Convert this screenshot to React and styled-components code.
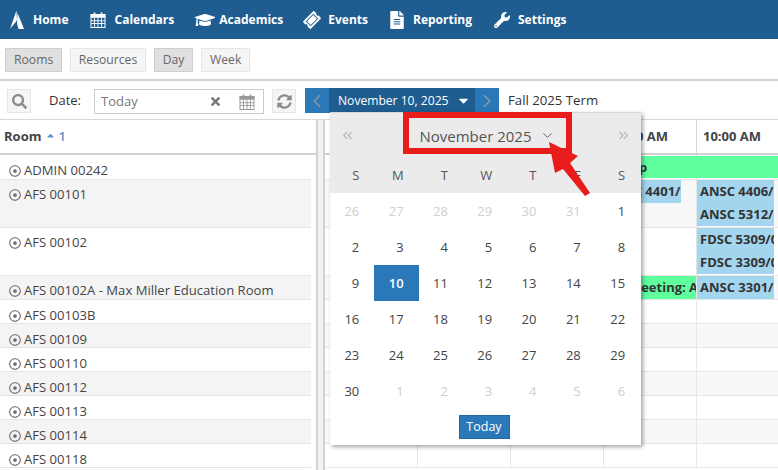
import React from "react";
import styled, { createGlobalStyle } from "styled-components";
import {
  FaGraduationCap,
  FaTicketAlt,
  FaFileAlt,
  FaWrench,
  FaSearch,
  FaTimes,
  FaSyncAlt,
  FaCaretDown,
  FaCaretUp,
  FaRegDotCircle,
} from "react-icons/fa";
import { ChevronDown, ChevronLeft, ChevronRight, ChevronsLeft, ChevronsRight } from "lucide-react";

const GlobalStyle = createGlobalStyle`
  html, body {
    margin: 0;
    padding: 0;
    background: #fff;
    overflow: hidden;
  }
  * {
    box-sizing: border-box;
  }
`;

const Page = styled.div`
  position: relative;
  width: 778px;
  height: 470px;
  overflow: hidden;
  font-family: "Open Sans", "Liberation Sans", sans-serif;
  font-size: 13px;
  color: #333;
`;

const NavBar = styled.div`
  display: flex;
  align-items: center;
  height: 39px;
  background: #1f5d91;
  padding-left: 9px;
`;

const NavItem = styled.div`
  display: flex;
  align-items: center;
  gap: ${(props) => props.gap || 8}px;
  margin-right: ${(props) => props.space || 0}px;
  color: #fff;
  font-weight: 700;
  font-size: 12px;
  white-space: nowrap;
  svg {
    display: block;
  }
`;

const ToolBar = styled.div`
  display: flex;
  align-items: flex-start;
  gap: 7.5px;
  height: 42px;
  padding: 9px 5px 0;
  border-bottom: 2px solid #d2d2d2;
`;

const ToggleButton = styled.div`
  height: 24px;
  padding: 0 8px;
  line-height: 22px;
  font-size: 12.2px;
  color: #666;
  background: ${(props) => (props.active ? "#e0e0e0" : "#f5f5f5")};
  border: 1px solid ${(props) => (props.active ? "#cfcfcf" : "#e6e6e6")};
`;

const DateRow = styled.div`
  display: flex;
  align-items: flex-start;
  height: 38px;
  padding: 7px 0 0 7px;
`;

const IconButton = styled.div`
  width: 24px;
  height: 24px;
  margin: 1px 0 0 ${(props) => props.before || 0}px;
  display: flex;
  align-items: center;
  justify-content: center;
  background: #f5f5f5;
  border: 1px solid #e6e6e6;
  color: #8c8c8c;
`;

const DateLabel = styled.div`
  margin: 3px 13px 0 18px;
  font-size: 13px;
  color: #333;
`;

const DateInput = styled.div`
  display: flex;
  align-items: center;
  width: 170px;
  height: 25px;
  margin-top: 1px;
  padding: 0 8px 0 6px;
  border: 1px solid #ccc;
  color: #777;
  font-size: 13px;
`;

const InputText = styled.span`
  flex: 1;
  margin-top: -2px;
`;

const ClearIcon = styled.span`
  display: flex;
  margin-right: 17px;
  color: #777;
`;

const DateNav = styled.div`
  display: flex;
  height: 25px;
  margin-left: 9px;
`;

const NavArrow = styled.div`
  width: 24px;
  display: flex;
  align-items: center;
  justify-content: center;
  background: #2a78b7;
  color: #8d9aa6;
`;

const NavCurrent = styled.div`
  display: flex;
  align-items: center;
  justify-content: space-between;
  width: 146px;
  padding: 0 4px 0 9px;
  background: #1f5d91;
  color: #fff;
  font-size: 12.1px;
`;

const TermLabel = styled.div`
  margin: 3px 0 0 9px;
  font-size: 13.2px;
  color: #333;
`;

const Grid = styled.div`
  display: flex;
  border-top: 1px solid #d8d8d8;
  height: 351px;
`;

const RoomPane = styled.div`
  width: 316px;
  flex-shrink: 0;
`;

const RoomHeader = styled.div`
  display: flex;
  align-items: center;
  height: 35px;
  padding: 0 0 2px 4px;
  border-bottom: 2px solid #d2d2d2;
  font-weight: 700;
  font-size: 13px;
  color: #444;
`;

const SortMark = styled.span`
  display: flex;
  align-items: center;
  margin-left: 4px;
  gap: 2px;
  color: #5f90c8;
  font-weight: 600;
`;

const RoomRow = styled.div`
  display: flex;
  align-items: flex-start;
  gap: 3px;
  width: 311px;
  height: ${(props) => props.height}px;
  padding: ${(props) => props.inset || 6}px 0 0 9px;
  background: ${(props) => (props.shaded ? "#f4f4f4" : "#fff")};
  border-bottom: 1px solid #e4e4e4;
  font-size: 13.1px;
  line-height: 18px;
  color: #444;
  svg {
    margin-top: 4px;
    color: #6e6e6e;
  }
`;

const Splitter = styled.div`
  width: 9px;
  flex-shrink: 0;
  background: #f2f2f2;
  border-left: 2px solid #d2d2d2;
  border-right: 2px solid #d2d2d2;
`;

const SchedulePane = styled.div`
  flex: 1;
  overflow: hidden;
`;

const TimeRow = styled.div`
  display: grid;
  grid-template-columns: repeat(6, 93px);
  height: 35px;
  border-bottom: 2px solid #d2d2d2;
`;

const TimeCell = styled.div`
  padding: 7px 0 0 6px;
  border-right: 1px solid #d8d8d8;
  font-weight: 700;
  font-size: 13px;
  color: #444;
  white-space: nowrap;
`;

const SlotRow = styled.div`
  display: grid;
  grid-template-columns: repeat(6, 93px);
  width: 558px;
  height: ${(props) => props.height}px;
  background: ${(props) => (props.shaded ? "#f8f8f8" : "#fff")};
  border-bottom: 1px solid #e6e6e6;
`;

const SlotCell = styled.div`
  border-right: 1px solid #e6e6e6;
  grid-row: 1;
  grid-column: ${(props) => props.col};
`;

const EventStack = styled.div`
  grid-row: 1;
  grid-column: ${(props) => props.col} / span ${(props) => props.span || 1};
  margin-top: ${(props) => props.top || 0}px;
  overflow: hidden;
`;

const EventBar = styled.div`
  width: ${(props) => props.width || "100%"};
  height: ${(props) => props.height}px;
  padding-left: 3px;
  background: ${(props) => (props.tone === "green" ? "#5fff9e" : "#a3d5ef")};
  font-weight: 700;
  font-size: 13px;
  line-height: 23px;
  color: #333;
  white-space: nowrap;
  overflow: hidden;
`;

const Popover = styled.div`
  position: absolute;
  left: 330px;
  top: 112px;
  width: 311px;
  height: 333px;
  background: #fff;
  box-shadow: 2px 2px 4px rgba(0, 0, 0, 0.35);
  border-top: 1px solid #d8d8d8;
`;

const PopoverHead = styled.div`
  height: 80px;
  background: #ebebeb;
`;

const MonthNav = styled.div`
  display: flex;
  align-items: center;
  justify-content: space-between;
  height: 45px;
  padding: 0 10px;
  color: #b5b5b5;
`;

const MonthTitle = styled.div`
  display: flex;
  align-items: center;
  gap: 8px;
  margin-left: 3px;
  font-size: 15px;
  color: #555;
  svg {
    color: #666;
  }
`;

const WeekRow = styled.div`
  display: grid;
  grid-template-columns: repeat(7, 44.3px);
  margin-top: 8px;
  text-align: right;
  font-size: 13px;
  color: #555;
  div {
    padding-right: 15px;
  }
`;

const DayGrid = styled.div`
  display: grid;
  grid-template-columns: repeat(7, 44.3px);
  grid-auto-rows: 36px;
  text-align: right;
  font-size: 13px;
`;

const DayCell = styled.div`
  padding-right: 15px;
  line-height: 36px;
  color: ${(props) => (props.selected ? "#fff" : props.muted ? "#cfcfcf" : "#444")};
  background: ${(props) => (props.selected ? "#2a78b7" : "transparent")};
  font-weight: ${(props) => (props.selected ? 600 : 400)};
`;

const PopoverFoot = styled.div`
  display: flex;
  justify-content: center;
  padding: 6px 3px 0 0;
`;

const TodayButton = styled.div`
  width: 51px;
  height: 24px;
  line-height: 22px;
  text-align: center;
  background: #2a78b7;
  border: 1px solid #1f6aa5;
  color: #fff;
  font-size: 12.5px;
`;

const RedBox = styled.div`
  position: absolute;
  left: 73px;
  top: -1px;
  width: 169px;
  height: 42px;
  border: 6px solid #e91c1c;
`;

const RedArrow = styled.svg`
  position: absolute;
  left: 540px;
  top: 135px;
`;

const CalendarGlyph = ({ size = 16, color = "#fff" }) => (
  <svg width={size} height={size} viewBox="0 0 16 16" fill="none" stroke={color}>
    <rect x="1" y="2.5" width="14" height="13" strokeWidth="1" />
    <rect x="1" y="2.5" width="14" height="3" fill={color} strokeWidth="0.6" />
    <path d="M4.5 6v9M8 6v9M11.5 6v9M1 8.7h14M1 11.5h14" strokeWidth="0.9" />
    <path d="M4.5 0.5v3.5M11.5 0.5v3.5" strokeWidth="1.8" />
  </svg>
);

const Logo = () => (
  <svg width="16" height="20" viewBox="0 0 16 20" fill="#fff">
    <path d="M7.5 0.5 L1 19 C3 16 6 13.5 8 10 Z" />
    <path d="M8.5 3 L15 19 L9.5 19 L8 13.5 Z" />
  </svg>
);

const ROOMS = [
  { name: "ADMIN 00242", height: 25 },
  { name: "AFS 00101", height: 48, shaded: true, inset: 5 },
  { name: "AFS 00102", height: 48, inset: 5 },
  { name: "AFS 00102A - Max Miller Education Room", height: 24, shaded: true, inset: 5 },
  { name: "AFS 00103B", height: 24 },
  { name: "AFS 00109", height: 24, shaded: true },
  { name: "AFS 00110", height: 24 },
  { name: "AFS 00112", height: 24, shaded: true },
  { name: "AFS 00113", height: 24 },
  { name: "AFS 00114", height: 24, shaded: true },
  { name: "AFS 00118", height: 24 },
];

const TIMES = ["06:00 AM", "07:00 AM", "08:00 AM", "09:00 AM", "10:00 AM", "11:00 AM"];
const COLUMNS = [1, 2, 3, 4, 5, 6];
const WEEK = ["S", "M", "T", "W", "T", "F", "S"];

const DAYS = [
  ...[26, 27, 28, 29, 30, 31].map((day) => ({ day, muted: true })),
  ...Array.from({ length: 30 }, (_, i) => ({ day: i + 1 })),
  ...[1, 2, 3, 4, 5, 6].map((day) => ({ day, muted: true })),
];

const renderEvents = (index) => {
  if (index === 0) {
    return (
      <EventStack col={4} span={3} top={1}>
        <EventBar tone="green" height={22}>Group</EventBar>
      </EventStack>
    );
  }
  if (index === 1) {
    return (
      <>
        <EventStack col={4}>
          <EventBar width="77px" height={23}>ANSC 4401/</EventBar>
        </EventStack>
        <EventStack col={5}>
          <EventBar width="77px" height={46}>
            ANSC 4406/
            <br />
            ANSC 5312/
          </EventBar>
        </EventStack>
      </>
    );
  }
  if (index === 2) {
    return (
      <EventStack col={5}>
        <EventBar width="77px" height={46}>
          FDSC 5309/0
          <br />
          FDSC 3309/0
        </EventBar>
      </EventStack>
    );
  }
  if (index === 3) {
    return (
      <>
        <EventStack col={4}>
          <EventBar tone="green" width="92px" height={23}>HR Meeting: ANSC</EventBar>
        </EventStack>
        <EventStack col={5}>
          <EventBar width="77px" height={23}>ANSC 3301/</EventBar>
        </EventStack>
      </>
    );
  }
  return null;
};

const App = () => {
  return (
    <Page>
      <GlobalStyle />
      <NavBar>
        <NavItem space={22}><Logo />Home</NavItem>
        <NavItem space={21}><CalendarGlyph />Calendars</NavItem>
        <NavItem gap={4} space={21}><FaGraduationCap size={20} />Academics</NavItem>
        <NavItem space={20}><FaTicketAlt size={16} style={{ transform: "rotate(-45deg)" }} />Events</NavItem>
        <NavItem gap={7} space={22}><FaFileAlt size={18} />Reporting</NavItem>
        <NavItem><FaWrench size={16} />Settings</NavItem>
      </NavBar>

      <ToolBar>
        <ToggleButton active>Rooms</ToggleButton>
        <ToggleButton>Resources</ToggleButton>
        <ToggleButton active>Day</ToggleButton>
        <ToggleButton>Week</ToggleButton>
      </ToolBar>

      <DateRow>
        <IconButton><FaSearch size={15} /></IconButton>
        <DateLabel>Date:</DateLabel>
        <DateInput>
          <InputText>Today</InputText>
          <ClearIcon><FaTimes size={13} /></ClearIcon>
          <CalendarGlyph size={16} color="#999" />
        </DateInput>
        <IconButton before={8}><FaSyncAlt size={15} /></IconButton>
        <DateNav>
          <NavArrow><ChevronLeft size={22} strokeWidth={1.6} /></NavArrow>
          <NavCurrent>
            November 10, 2025
            <FaCaretDown size={15} />
          </NavCurrent>
          <NavArrow><ChevronRight size={22} strokeWidth={1.6} /></NavArrow>
        </DateNav>
        <TermLabel>Fall 2025 Term</TermLabel>
      </DateRow>

      <Grid>
        <RoomPane>
          <RoomHeader>
            Room
            <SortMark><FaCaretUp size={11} />1</SortMark>
          </RoomHeader>
          {ROOMS.map((room) => (
            <RoomRow key={room.name} height={room.height} shaded={room.shaded} inset={room.inset}>
              <FaRegDotCircle size={12} />
              {room.name}
            </RoomRow>
          ))}
        </RoomPane>
        <Splitter />
        <SchedulePane>
          <TimeRow>
            {TIMES.map((time) => (
              <TimeCell key={time}>{time}</TimeCell>
            ))}
          </TimeRow>
          {ROOMS.map((room, index) => (
            <SlotRow key={room.name} height={room.height} shaded={room.shaded}>
              {COLUMNS.map((col) => (
                <SlotCell key={col} col={col} />
              ))}
              {renderEvents(index)}
            </SlotRow>
          ))}
        </SchedulePane>
      </Grid>

      <Popover>
        <PopoverHead>
          <MonthNav>
            <ChevronsLeft size={15} strokeWidth={2} />
            <MonthTitle>
              November 2025
              <ChevronDown size={15} strokeWidth={1.6} />
            </MonthTitle>
            <ChevronsRight size={15} strokeWidth={2} />
          </MonthNav>
          <WeekRow>
            {WEEK.map((name, i) => (
              <div key={i}>{name}</div>
            ))}
          </WeekRow>
        </PopoverHead>
        <DayGrid>
          {DAYS.map((item, i) => (
            <DayCell key={i} muted={item.muted} selected={!item.muted && item.day === 10}>
              {item.day}
            </DayCell>
          ))}
        </DayGrid>
        <PopoverFoot>
          <TodayButton>Today</TodayButton>
        </PopoverFoot>
        <RedBox />
      </Popover>

      <RedArrow width="56" height="66" viewBox="0 0 56 66">
        <path
          d="M9 7 L38 21 L30 28 L50 58 L45 61 L23 34 L15 38 Z"
          fill="#e91c1c"
        />
      </RedArrow>
    </Page>
  );
};

export default App;
